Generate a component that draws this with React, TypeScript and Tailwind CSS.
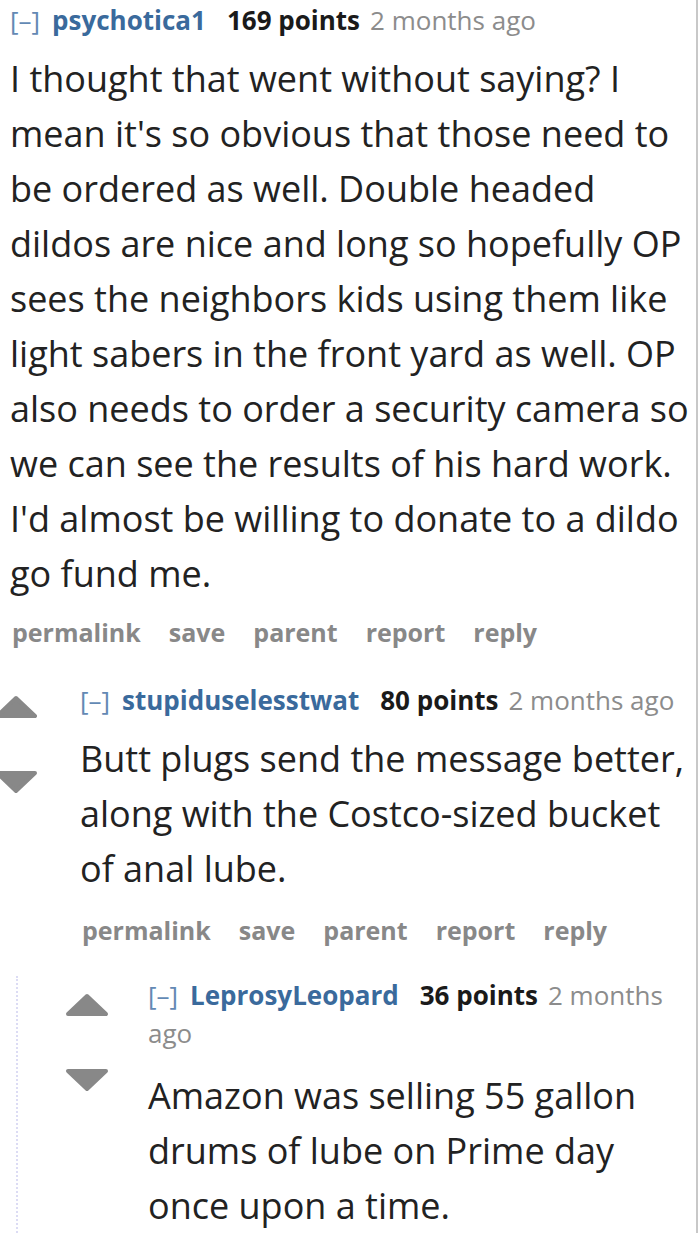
import React from "react";

const Arrow = ({ down = false }: { down?: boolean }) => (
  <svg width="44" height="24" viewBox="0 0 44 24" className="block">
    <polygon
      points={down ? "3,3 41,3 22,21" : "22,3 41,21 3,21"}
      fill="#888888"
      stroke="#888888"
      strokeWidth="4"
      strokeLinejoin="round"
    />
  </svg>
);

const Header = ({
  name,
  points,
  time,
}: {
  name: string;
  points: string;
  time: React.ReactNode;
}) => (
  <div className="text-[26px] leading-[38px] whitespace-nowrap">
    <span className="text-[#6389b4]">[–]</span>
    <span className="ml-[12px] font-bold text-[#3a6a9c]">{name}</span>
    <span className="ml-[21px] font-bold text-[#1a1a1a]">{points}</span>
    <span className="ml-[10px] text-[#8c8c8c]">{time}</span>
  </div>
);

const Actions = () => (
  <div className="flex gap-[28px] pl-[2px] text-[25px] font-bold leading-[38px] text-[#888888]">
    <span>permalink</span>
    <span>save</span>
    <span>parent</span>
    <span>report</span>
    <span>reply</span>
  </div>
);

const Body = ({ lines }: { lines: string[] }) => (
  <div className="text-[36px] leading-[55px] text-[#222222] whitespace-nowrap">
    {lines.map((l, i) => (
      <div key={i}>{l}</div>
    ))}
  </div>
);

export default function App() {
  return (
    <div
      className="w-[698px] h-[1233px] overflow-hidden bg-white border-r-2 border-[#c8c8c8]"
      style={{ fontFamily: "'Open Sans', 'Noto Sans', sans-serif" }}
    >
      {/* Comment 1 */}
      <div className="pl-[10px] pt-[1px]">
        <Header name="psychotica1" points="169 points" time="2 months ago" />
        <div className="mt-[12px]">
          <Body
            lines={[
              "I thought that went without saying? I",
              "mean it's so obvious that those need to",
              "be ordered as well. Double headed",
              "dildos are nice and long so hopefully OP",
              "sees the neighbors kids using them like",
              "light sabers in the front yard as well. OP",
              "also needs to order a security camera so",
              "we can see the results of his hard work.",
              "I'd almost be willing to donate to a dildo",
              "go fund me.",
            ]}
          />
        </div>
        <div className="mt-[12px]">
          <Actions />
        </div>
      </div>

      {/* Comment 2 */}
      <div className="mt-[30px]">
        <div className="flex">
          <div className="-ml-[6px] w-[44px] shrink-0 pt-[14px] flex flex-col">
            <Arrow />
            <div className="mt-[51px]">
              <Arrow down />
            </div>
          </div>
          <div className="ml-[42px]">
            <Header name="stupiduselesstwat" points="80 points" time="2 months ago" />
            <div className="mt-[12px]">
              <Body
                lines={[
                  "Butt plugs send the message better,",
                  "along with the Costco-sized bucket",
                  "of anal lube.",
                ]}
              />
            </div>
            <div className="mt-[15px]">
              <Actions />
            </div>
          </div>
        </div>

        {/* Comment 3 (child) */}
        <div className="mt-[27px] ml-[16px] border-l-2 border-dotted border-[#dcdcf4]">
          <div className="flex">
            <div className="ml-[47px] w-[44px] shrink-0 pt-[17px] flex flex-col">
              <Arrow />
              <div className="mt-[51px]">
                <Arrow down />
              </div>
            </div>
            <div className="ml-[39px]">
              <Header
                name="LeprosyLeopard"
                points="36 points"
                time={
                  <>
                    2 months
                    <br />
                    ago
                  </>
                }
              />
              <div className="mt-[16px]">
                <Body
                  lines={[
                    "Amazon was selling 55 gallon",
                    "drums of lube on Prime day",
                    "once upon a time.",
                  ]}
                />
              </div>
            </div>
          </div>
        </div>
      </div>
    </div>
  );
}
